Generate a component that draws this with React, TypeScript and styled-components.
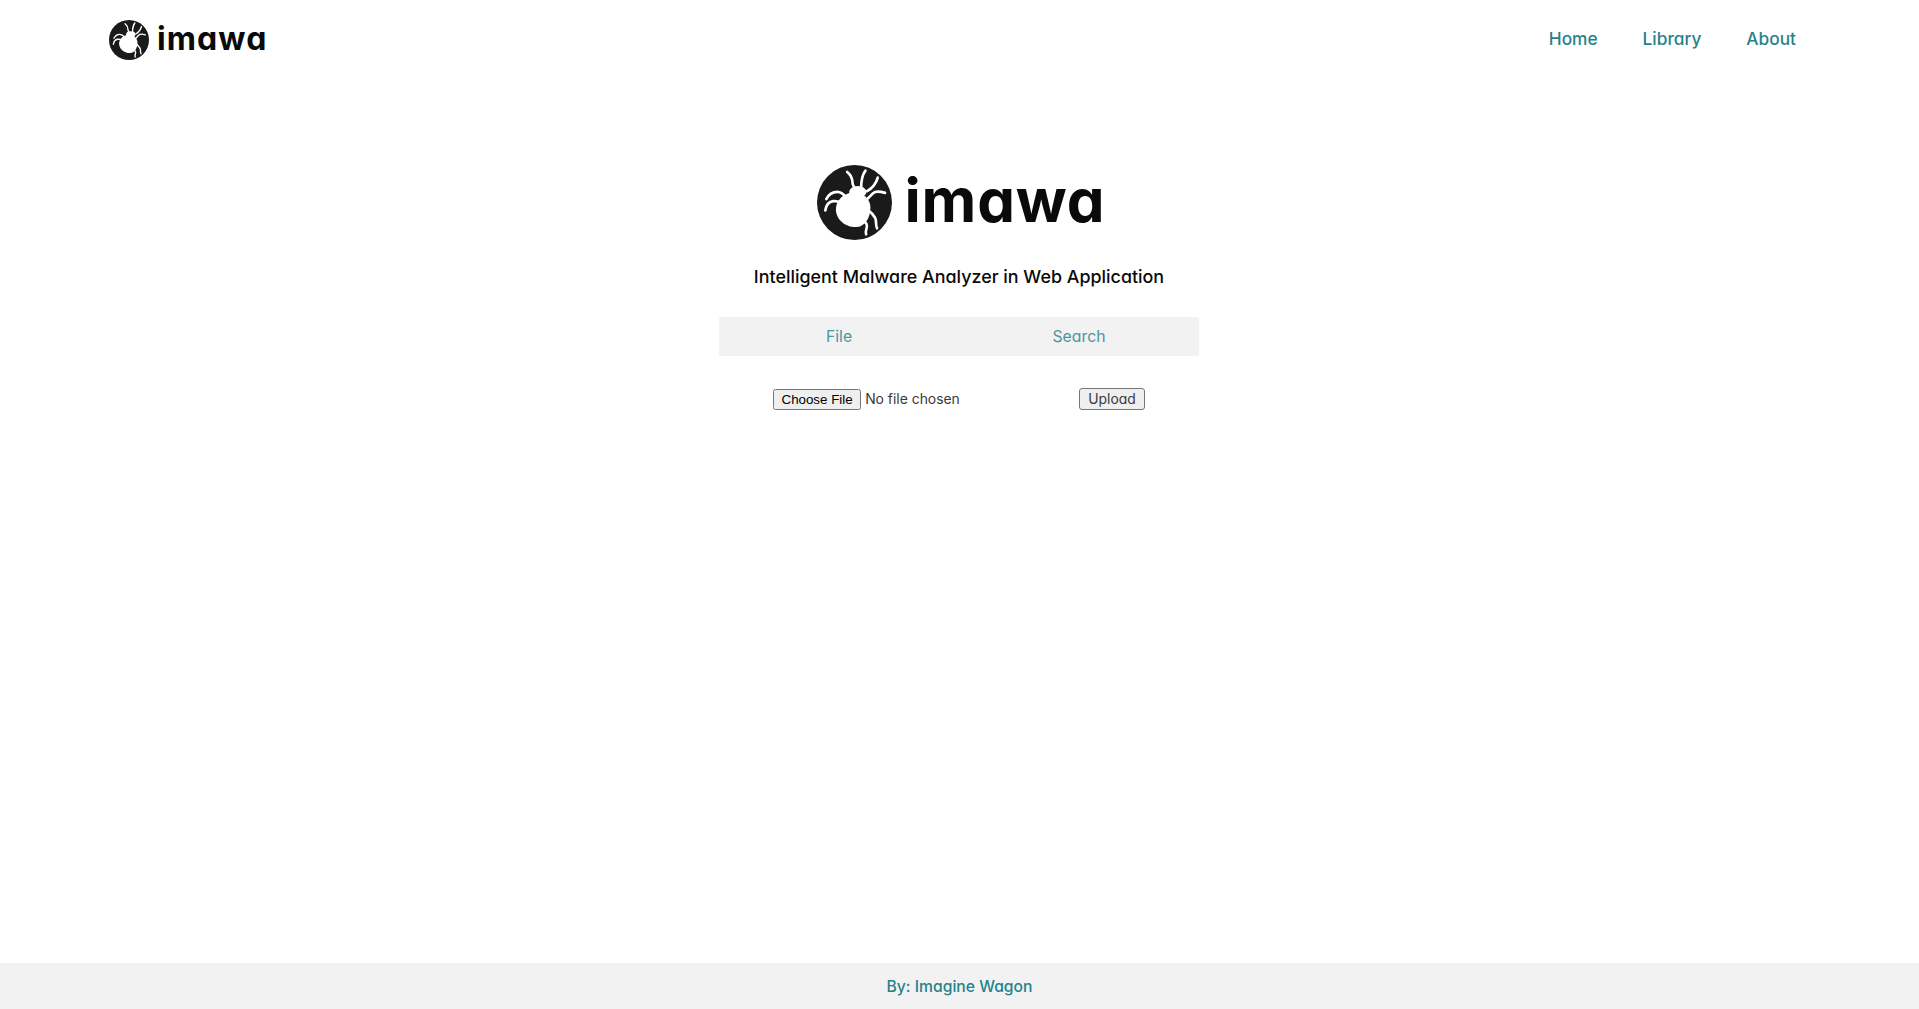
import React from "react";
import styled, { createGlobalStyle } from "styled-components";

const Global = createGlobalStyle`
  html, body { margin: 0; padding: 0; background: #fff; }
  body { font-family: "Inter", "Noto Sans", sans-serif; font-feature-settings: "cv11" 1; }
`;
const Page = styled.div`
  min-height: 1009px;
  display: flex;
  flex-direction: column;
`;
const Header = styled.header`
  height: 78px;
  box-sizing: border-box;
  padding: 20px 123px 0 109px;
  display: flex;
  justify-content: space-between;
  align-items: flex-start;
`;
const LogoRow = styled.div<{ $gap: number; $inset?: number }>`
  display: flex;
  align-items: center;
  gap: ${(p) => p.$gap}px;
  margin-left: ${(p) => p.$inset ?? 0}px;
`;
const LogoText = styled.span<{ $size: number; $spacing: number }>`
  font-size: ${(p) => p.$size}px;
  font-weight: 700;
  line-height: 1;
  padding-bottom: 0.07em;
  color: #0a0a0a;
  letter-spacing: ${(p) => p.$spacing}px;
`;
const Nav = styled.nav`
  display: flex;
  gap: 45px;
  padding-top: 8px;
`;
const NavLink = styled.a`
  font-size: 17.3px;
  font-weight: 500;
  line-height: 22px;
  color: #25828c;
  text-decoration: none;
`;
const Main = styled.main`
  flex: 1;
  display: flex;
  flex-direction: column;
  align-items: center;
  padding: 87px 1px 0 0;
`;
const Tagline = styled.p`
  margin: 25px 0 0;
  font-size: 17.9px;
  font-weight: 500;
  line-height: 24px;
  color: #0a0a0a;
`;
const Panel = styled.section`
  width: 480px;
  margin-top: 28px;
`;
const Tabs = styled.div`
  display: grid;
  grid-template-columns: 1fr 1fr;
  height: 39px;
  background: #f2f2f2;
  border-radius: 2px;
`;
const Tab = styled.button`
  border: 0;
  background: transparent;
  font: 400 15.8px "Inter", "Noto Sans", sans-serif;
  font-feature-settings: "cv11" 1;
  color: #4f959d;
  padding: 0;
`;
const UploadForm = styled.form`
  display: flex;
  justify-content: space-between;
  align-items: center;
  padding: 32px 54px 0;
`;
const FileInput = styled.input`
  width: 253px;
  font: 400 13.9px "Inter", "Noto Sans", sans-serif;
  font-feature-settings: "cv11" 1;
  color: #3a3a3a;
  &::file-selector-button {
    font: 400 13.33px "Liberation Sans", Arial, sans-serif;
    color: #000;
    height: 21px;
    padding: 1px 6.5px;
  }
`;
const UploadButton = styled.button`
  height: 22px;
  width: 66px;
  padding: 0;
  font: 400 13.9px "Inter", "Noto Sans", sans-serif;
  font-feature-settings: "cv11" 1;
  color: #3a3a3a;
  background: #efefef;
  border: 1px solid #767676;
  border-radius: 3px;
`;
const Footer = styled.footer`
  height: 46px;
  background: #f2f2f2;
  display: flex;
  align-items: center;
  justify-content: center;
  font-size: 15.7px;
  font-weight: 500;
  color: #25828c;
`;

const BugLogo = ({ size }: { size: number }) => (
  <svg width={size} height={size} viewBox="17 19 226 226" aria-hidden="true">
    <circle cx="130" cy="132" r="113" fill="#1a1a1a" />
    <g fill="none" stroke="#fff" strokeLinecap="round" strokeLinejoin="round" strokeWidth="8">
      <path d="M108 40 C120 50 124 60 124 72 C124 82 130 88 136 94" />
      <path d="M163 36 C154 48 150 62 150 88" />
      <path d="M200 57 C196 72 188 86 168 98" />
      <path d="M45 122 C52 108 62 100 78 100 C90 100 98 108 106 118" />
      <path d="M42 156 C44 142 52 130 66 128 C74 127 80 128 88 132" />
      <path d="M222 103 C206 98 194 96 186 104 C180 110 176 114 170 120" />
      <path d="M198 210 C192 198 198 190 192 178 C186 168 178 160 170 154" />
      <path d="M165 228 C160 216 172 208 166 196 C162 190 158 186 152 182" />
    </g>
    <ellipse cx="140" cy="100" rx="26" ry="18" fill="#fff" />
    <path d="M122 102 C96 106 74 126 74 152 C74 184 104 208 138 206 C162 204 178 178 178 148 C178 120 156 100 122 102 Z" fill="#fff" />
  </svg>
);

export default function App() {
  return (
    <Page>
      <Global />
      <Header>
        <LogoRow $gap={8}>
          <BugLogo size={40} />
          <LogoText $size={32} $spacing={1.1}>imawa</LogoText>
        </LogoRow>
        <Nav>
          <NavLink href="#">Home</NavLink>
          <NavLink href="#">Library</NavLink>
          <NavLink href="#">About</NavLink>
        </Nav>
      </Header>
      <Main>
        <LogoRow $gap={13} $inset={4}>
          <BugLogo size={75} />
          <LogoText $size={60} $spacing={0.8}>imawa</LogoText>
        </LogoRow>
        <Tagline>Intelligent Malware Analyzer in Web Application</Tagline>
        <Panel>
          <Tabs>
            <Tab type="button">File</Tab>
            <Tab type="button">Search</Tab>
          </Tabs>
          <UploadForm onSubmit={(e) => e.preventDefault()}>
            <FileInput type="file" />
            <UploadButton type="submit">Upload</UploadButton>
          </UploadForm>
        </Panel>
      </Main>
      <Footer>By: Imagine Wagon</Footer>
    </Page>
  );
}
